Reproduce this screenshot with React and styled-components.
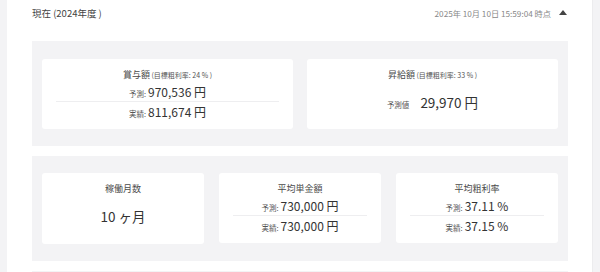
import React from 'react';
import styled, { createGlobalStyle } from 'styled-components';

const GlobalStyle = createGlobalStyle`
  html, body {
    margin: 0;
    padding: 0;
    background: #f3f3f5;
    font-family: "Noto Sans CJK JP", "Noto Sans", sans-serif;
    color: #444;
  }
`;

const Panel = styled.div`
  margin: 0 7px;
  background: #fff;
  border-right: 1px solid #ececee;
  padding: 0 24px 0 25px;
  height: 272px;
  overflow: hidden;
`;

const Header = styled.div`
  display: flex;
  align-items: center;
  justify-content: space-between;
  height: 25px;
  margin-bottom: 16px;
`;

const Title = styled.div`
  font-size: 9.5px;
  color: #444;
`;

const Stamp = styled.div`
  display: flex;
  align-items: center;
  gap: 8px;
  font-size: 8.2px;
  color: #888;
`;

const Caret = styled.span`
  width: 0;
  height: 0;
  border-left: 4.5px solid transparent;
  border-right: 4.5px solid transparent;
  border-bottom: 5px solid #444;
  margin-right: 1px;
`;

const Section = styled.div`
  display: grid;
  grid-template-columns: repeat(${({ cols }) => cols}, 1fr);
  gap: ${({ cols }) => (cols === 2 ? 14 : 15)}px;
  background: #f3f3f5;
  padding: ${({ cols }) => (cols === 2 ? '18px 10px 17px' : '17px 10px 17px')};
  margin-bottom: 10px;
`;

const Card = styled.div`
  background: #fff;
  border-radius: 3px;
  height: ${({ tall }) => (tall ? 71 : 70)}px;
  padding: 8px 14px 0;
  box-sizing: border-box;
  display: flex;
  flex-direction: column;
  align-items: stretch;
`;

const CardTitle = styled.div`
  text-align: center;
  font-size: 9px;
  line-height: 16px;
  color: #4a4a4a;
`;

const Sub = styled.span`
  font-size: 7px;
  color: #555;
`;

const Line = styled.div`
  display: flex;
  justify-content: center;
  align-items: baseline;
  height: 18px;
  line-height: 18px;
  border-top: ${({ divided }) => (divided ? '1px solid #eeeef0' : 'none')};
  padding-top: ${({ divided }) => (divided ? 1 : 0)}px;
`;

const Label = styled.span`
  font-size: 7.5px;
  color: #555;
  margin-right: ${({ wide }) => (wide ? 11 : 2)}px;
`;

const Value = styled.span`
  font-size: ${({ big }) => (big ? 13.5 : 12)}px;
  color: #333;
`;

const BigLine = styled.div`
  display: flex;
  justify-content: center;
  align-items: baseline;
  margin-top: 8px;
  line-height: 22px;
`;

const TwoRow = ({ title, sub, pred, actual }) => (
  <Card>
    <CardTitle>
      {title}
      {sub && <Sub> {sub}</Sub>}
    </CardTitle>
    <Line>
      <Label>予測:</Label>
      <Value>{pred}</Value>
    </Line>
    <Line divided>
      <Label>実績:</Label>
      <Value>{actual}</Value>
    </Line>
  </Card>
);

const App = () => (
  <>
    <GlobalStyle />
    <Panel>
      <Header>
        <Title>現在 (2024年度 )</Title>
        <Stamp>
          2025年 10月 10日 15:59:04 時点
          <Caret />
        </Stamp>
      </Header>
      <Section cols={2}>
        <TwoRow title="賞与額" sub="(目標粗利率: 24 % )" pred="970,536 円" actual="811,674 円" />
        <Card>
          <CardTitle>
            昇給額<Sub> (目標粗利率: 33 % )</Sub>
          </CardTitle>
          <BigLine>
            <Label wide>予測値</Label>
            <Value big>29,970 円</Value>
          </BigLine>
        </Card>
      </Section>
      <Section cols={3}>
        <Card tall>
          <CardTitle>稼働月数</CardTitle>
          <BigLine>
            <Value big>10 ヶ月</Value>
          </BigLine>
        </Card>
        <TwoRow title="平均単金額" pred="730,000 円" actual="730,000 円" />
        <TwoRow title="平均粗利率" pred="37.11 %" actual="37.15 %" />
      </Section>
      <Section cols={3} />
    </Panel>
  </>
);

export default App;
